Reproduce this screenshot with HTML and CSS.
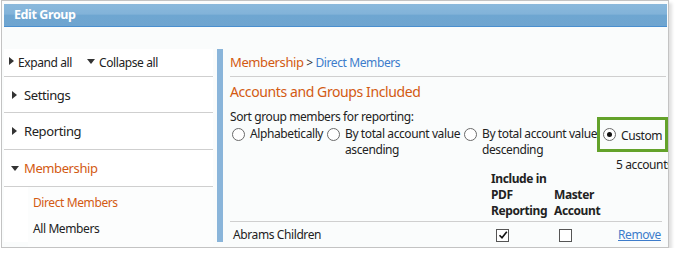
FILE: index.html
```html
<!DOCTYPE html>
<html>
<head>
    <title>Edit Group</title>
    <link rel="stylesheet" href="styles.css">
</head>
<body>

    <div class="dialog">
        <div class="dialog-header">Edit Group</div>

        <div class="dialog-body">
            <div class="nav">
                <div class="nav-tools">
                    <span class="tool"><span class="tri-right small"></span>Expand all</span>
                    <span class="tool"><span class="tri-down small"></span>Collapse all</span>
                </div>
                <div class="nav-item first"><span class="tri-right"></span>Settings</div>
                <div class="nav-item"><span class="tri-right"></span>Reporting</div>
                <div class="nav-item active"><span class="tri-down"></span>Membership</div>
                <div class="nav-sub">
                    <div class="sub-item current">Direct Members</div>
                    <div class="sub-item">All Members</div>
                </div>
            </div>

            <div class="divider"></div>

            <div class="main">
                <div class="breadcrumb">
                    <span class="crumb-parent">Membership</span> &gt; <span class="crumb-child">Direct Members</span>
                </div>
                <h2 class="section-title">Accounts and Groups Included</h2>
                <div class="sort-label">Sort group members for reporting:</div>
                <div class="sort-options">
                    <label class="option opt-alpha"><span class="radio"></span><span>Alphabetically</span></label>
                    <label class="option opt-asc"><span class="radio"></span><span class="wrap">By total account value ascending</span></label>
                    <label class="option opt-desc"><span class="radio"></span><span class="wrap">By total account value descending</span></label>
                    <label class="option opt-custom"><span class="radio checked"></span><span>Custom</span></label>
                </div>
                <div class="count">5 accounts</div>

                <div class="members">
                    <div class="members-head">
                        <div></div>
                        <div>Include in PDF Reporting</div>
                        <div>Master Account</div>
                        <div></div>
                    </div>
                    <div class="members-row">
                        <div class="name">Abrams Children</div>
                        <div>
                            <span class="checkbox">
                                <svg width="10" height="10" viewBox="0 0 10 10"><path d="M1.5 5.2 L4 7.8 L8.8 1.8" fill="none" stroke="#111" stroke-width="1.6"/></svg>
                            </span>
                        </div>
                        <div><span class="checkbox"></span></div>
                        <div><a href="#" class="remove">Remove</a></div>
                    </div>
                </div>
            </div>
        </div>
    </div>

</body>
</html>
```

FILE: styles.css
```css
body, html {
    margin: 0;
    background: #ffffff;
    font-family: "Noto Sans", "Open Sans", sans-serif;
    font-size: 12px;
    letter-spacing: -0.4px;
    color: #222;
}

.dialog {
    margin: 0 0 0 1px;
    width: 663px;
    height: 243px;
    padding: 3px 1px 0 2px;
    border: 1px solid #c3c3c3;
    box-shadow: 3px 3px 3px rgba(0, 0, 0, 0.12);
    overflow: hidden;
    background: #fafcfc;
}

.dialog-header {
    height: 22px;
    line-height: 21px;
    padding-left: 10px;
    color: #fff;
    font-weight: bold;
    font-size: 12.5px;
    background: linear-gradient(to bottom, #8ab9dc 0%, #82b3d9 45%, #6ea6d1 52%, #6fa5d0 100%);
    border-bottom: 1px solid #4a8fcf;
}

.dialog-body {
    display: flex;
    padding-top: 22px;
    height: 193px;
}

/* left navigation */
.nav {
    flex: none;
    width: 209px;
    background: #fff;
}

.nav-tools {
    display: flex;
    gap: 15px;
    height: 27px;
    align-items: center;
    padding-left: 5px;
    border-bottom: 1px solid #cfcfcf;
}

.tool {
    display: flex;
    align-items: center;
    font-size: 12px;
}

.nav-item {
    display: flex;
    align-items: center;
    height: 36px;
    padding-left: 8px;
    font-size: 13px;
    border-bottom: 1px solid #cfcfcf;
}

.nav-item.first {
    height: 35px;
}

.nav-item.active {
    color: #d35a12;
    padding-left: 7px;
}

.tri-right {
    width: 0;
    height: 0;
    border-top: 4px solid transparent;
    border-bottom: 4px solid transparent;
    border-left: 5px solid #333;
    margin-right: 7px;
}

.tri-down {
    width: 0;
    height: 0;
    border-left: 4px solid transparent;
    border-right: 4px solid transparent;
    border-top: 5px solid #333;
    margin-right: 5px;
}

.tri-right.small, .tri-down.small {
    margin-right: 4px;
    margin-top: -3px;
}

.nav-sub {
    margin-left: 24px;
    padding: 6px 0 0 5px;
    background: #fcfdfd;
    height: 60px;
}

.sub-item {
    height: 26px;
    line-height: 20px;
    font-size: 12px;
}

.sub-item.current {
    color: #d35a12;
}

.divider {
    flex: none;
    width: 6px;
    margin-left: 4px;
    background: #8ab5da;
}

/* main panel */
.main {
    flex: 1;
    min-width: 0;
    padding-left: 7px;
}

.breadcrumb {
    height: 27px;
    line-height: 27px;
    border-bottom: 1px solid #cfcfcf;
    font-size: 12px;
    color: #333;
    margin-right: 1px;
}

.crumb-parent {
    color: #d35a12;
    font-size: 13px;
}

.crumb-child {
    color: #3d7ccb;
}

.section-title {
    margin: 0;
    font-weight: normal;
    font-size: 14px;
    color: #d35a12;
    height: 32px;
    line-height: 30px;
}

.sort-label {
    font-size: 12px;
    line-height: 16px;
}

.sort-options {
    display: flex;
    align-items: flex-start;
    height: 32px;
}

.option {
    display: flex;
    flex: none;
    align-items: flex-start;
    gap: 5px;
    line-height: 16px;
    padding-top: 1px;
}

.opt-alpha { width: 95px; padding-left: 2px; }
.opt-asc { width: 137px; }
.opt-desc { width: 133px; }

.option .wrap {
    flex: none;
    width: 124px;
}

.opt-custom {
    width: 62px;
    height: 27px;
    padding: 2px 0 0 3px;
    border: 3px solid #63a22a;
    margin-top: -8px;
    line-height: 24px;
    align-items: center;
    background: #fafcfc;
}

.radio {
    flex: none;
    width: 11px;
    height: 11px;
    margin-top: 2px;
    border: 1px solid #6a6a6a;
    border-radius: 50%;
    background: #fff;
    position: relative;
}

.opt-custom .radio {
    margin-top: -3px;
}

.radio.checked::after {
    content: "";
    position: absolute;
    left: 3px;
    top: 3px;
    width: 5px;
    height: 5px;
    border-radius: 50%;
    background: #111;
}

.count {
    padding-left: 386px;
    white-space: nowrap;
    line-height: 16px;
    height: 14px;
}

.members-head,
.members-row {
    display: grid;
    grid-template-columns: 261px 63px 61px 49px;
}

.members-head {
    font-weight: bold;
    font-size: 12px;
    line-height: 16px;
    align-items: end;
    border-bottom: 1px solid #cfcfcf;
    padding-bottom: 2px;
    margin-right: 5px;
}

.members-row {
    height: 24px;
    align-items: center;
}

.members-row .name {
    padding-left: 3px;
}

.checkbox {
    display: inline-flex;
    align-items: center;
    justify-content: center;
    width: 11px;
    height: 11px;
    border: 1px solid #555;
    background: #fff;
    margin-left: 5px;
    vertical-align: middle;
}

.remove {
    color: #3d7ccb;
    text-decoration: underline;
    padding-left: 3px;
}
```
